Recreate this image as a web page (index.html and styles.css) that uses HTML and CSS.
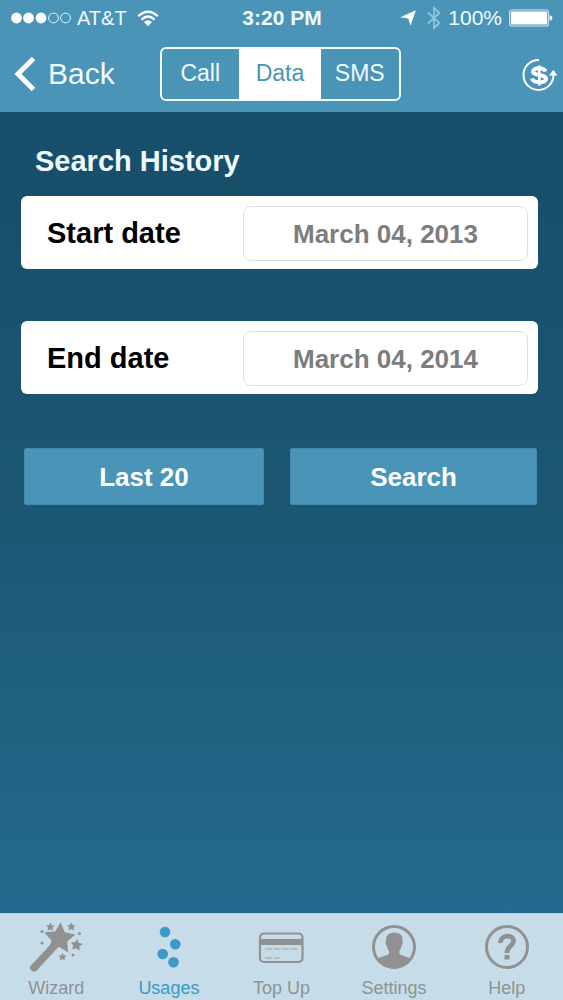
FILE: index.html
```html
<!DOCTYPE html>
<html lang="en">
<head>
<meta charset="utf-8">
<meta name="viewport" content="width=device-width, initial-scale=1">
<title>Search History</title>
<link rel="stylesheet" href="styles.css">
</head>
<body>
<div class="app">
  <header class="header">
    <div class="status">
      <div class="status-left">
        <svg class="signal" width="60" height="14" viewBox="0 0 60 14" aria-hidden="true">
          <g fill="#fff"><circle cx="5.500" cy="7" r="5.400"/><circle cx="17.500" cy="7" r="5.400"/><circle cx="30" cy="7" r="5.400"/></g>
          <g fill="none" stroke="#e6f6fd"><circle cx="42.500" cy="7" r="4.900"/><circle cx="54.500" cy="7" r="4.900"/></g>
        </svg>
        <span>AT&amp;T</span>
        <svg class="wifi" width="22" height="17" viewBox="0 0 22 17" aria-hidden="true">
          <g fill="none" stroke="#fff" stroke-width="2.400"><path d="M1.300 6.200Q11-2.600 20.700 6.200"/><path d="M4.500 9.600Q11 3.400 17.500 9.600"/></g>
          <path fill="#fff" d="M7 12Q11 8.300 15 12L11 16.200Z"/>
        </svg>
      </div>
      <span class="time">3:20 PM</span>
      <div class="status-right">
        <svg class="locate" width="16" height="16" viewBox="0 0 16 16" aria-hidden="true"><path fill="#fff" d="M15.800.3L10.500 15.800L8.300 8.600L.3 7.300Z"/></svg>
        <svg class="bluetooth" width="14" height="24" viewBox="0 0 14 24" aria-hidden="true"><path fill="none" stroke="#94c6dc" stroke-width="1.700" d="M1 6.500L12.500 17L7 22V2L12.500 7L1 17.500"/></svg>
        <span>100%</span>
        <svg class="battery" width="44" height="18" viewBox="0 0 44 18" aria-hidden="true">
          <rect x=".7" y="1" width="38.600" height="16" rx="2" fill="none" stroke="#cfe7f2" stroke-width="1.200"/>
          <rect x="2" y="2.500" width="36" height="13" rx="1" fill="#fff"/>
          <path fill="#e9f6fc" d="M40.500 6Q43.500 7 43.500 9T40.500 12Z"/>
        </svg>
      </div>
    </div>
    <nav class="navbar">
      <button class="back" type="button">
        <svg width="22" height="36" viewBox="0 0 22 36" aria-hidden="true"><path fill="none" stroke="#fff" stroke-width="5" d="M19.500 2.500L4 18L19.500 33.500"/></svg>
        <span>Back</span>
      </button>
      <div class="segments">
        <button class="segment" type="button">Call</button>
        <button class="segment selected" type="button">Data</button>
        <button class="segment" type="button">SMS</button>
      </div>
      <button class="balance" type="button" aria-label="Balance">
        <svg width="37" height="36" viewBox="0 0 37 36" aria-hidden="true">
          <path fill="none" stroke="#fff" stroke-width="2" d="M18 4A15 15 0 1 0 32.500 19V15"/>
          <path fill="#fff" d="M32.300 14L36.500 19.500H28Z"/>
          <path fill="none" stroke="#fff" stroke-width="4" d="M24.500 15.500C23 11.500 12 11 12 15.800C12 20 25 18 25 22.800C25 27.500 12.500 27.500 11 22.500"/>
          <path stroke="#fff" stroke-width="2.600" d="M18.300 9.500V29.500"/>
        </svg>
      </button>
    </nav>
  </header>
  <main class="content">
    <h1 class="title">Search History</h1>
    <form class="form">
      <div class="card">
        <label for="start">Start date</label>
        <input id="start" class="date" type="text" value="March 04, 2013">
      </div>
      <div class="card">
        <label for="end">End date</label>
        <input id="end" class="date" type="text" value="March 04, 2014">
      </div>
      <div class="actions">
        <button class="action" type="button">Last 20</button>
        <button class="action" type="button">Search</button>
      </div>
    </form>
  </main>
  <nav class="tabs">
    <a class="tab" href="#wizard">
      <svg width="56" height="54" viewBox="0 0 56 54" aria-hidden="true">
        <defs><path id="star" d="M0-10L2.900-4L9.500-3.100L4.800 1.500L5.900 8.100L0 5L-5.900 8.100L-4.800 1.500L-9.500-3.100L-2.900-4Z"/></defs>
        <g fill="#919191">
          <use href="#star" transform="translate(31.500 19.500) rotate(4) scale(1.640)"/>
          <use href="#star" transform="translate(22.300 8) scale(.45)"/>
          <use href="#star" transform="translate(43.200 7.800) scale(.45)"/>
          <use href="#star" transform="translate(48.500 26) rotate(8) scale(.64)"/>
          <use href="#star" transform="translate(34.500 38) scale(.42)"/>
          <circle cx="14" cy="12.500" r="1.500"/><circle cx="14" cy="24" r="1.500"/><circle cx="51.500" cy="14.500" r="1.500"/><circle cx="45" cy="36" r="1.500"/>
        </g>
        <path stroke="#919191" stroke-width="7.600" stroke-linecap="round" d="M6 48.800L28 25"/>
      </svg>
      <span>Wizard</span>
    </a>
    <a class="tab current" href="#usages">
      <svg width="56" height="54" viewBox="0 0 56 54" aria-hidden="true"><g fill="#3b9ac6"><circle cx="24" cy="13" r="5.300"/><circle cx="34.300" cy="25.200" r="5.300"/><circle cx="21.700" cy="35" r="5.300"/><circle cx="32.500" cy="43.200" r="5.300"/></g></svg>
      <span>Usages</span>
    </a>
    <a class="tab" href="#top-up">
      <svg width="56" height="54" viewBox="0 0 56 54" aria-hidden="true">
        <rect x="7" y="14.500" width="42.500" height="28.500" rx="4" fill="none" stroke="#919191" stroke-width="2.200"/>
        <path fill="#919191" d="M8 20H49V26H8Z"/>
        <path fill="none" stroke="#aab4b8" stroke-width="1.500" stroke-dasharray="7 1.500" d="M12 30H46M12 39H28"/>
      </svg>
      <span>Top Up</span>
    </a>
    <a class="tab" href="#settings">
      <svg width="56" height="54" viewBox="0 0 56 54" aria-hidden="true">
        <circle cx="28" cy="28" r="20.500" fill="none" stroke="#919191" stroke-width="3"/>
        <path fill="#919191" d="M11.500 40C16 36.500 23 37 23 34V32C21.500 30 21 28 20.700 26.500C19 25.500 19.300 22 20.300 21.500C19.300 16 23 14 28.500 13.500C34 14 37.500 16 36.200 21.500C37.300 22 37 25.500 35.500 26.500C35 29 34.500 31 33.300 32V34C33.500 37 40.500 36.500 44.500 40Q37 49 28 49T11.500 40Z"/>
      </svg>
      <span>Settings</span>
    </a>
    <a class="tab" href="#help">
      <svg width="56" height="54" viewBox="0 0 56 54" aria-hidden="true">
        <circle cx="28" cy="28" r="20.500" fill="none" stroke="#919191" stroke-width="3"/>
        <path fill="none" stroke="#919191" stroke-width="4.800" d="M21.500 24C21 15 35.500 15 34.500 22.500C34 27 28 27 28 34"/>
        <path fill="#919191" d="M25.500 36H30.500V40.500H25.500Z"/>
      </svg>
      <span>Help</span>
    </a>
  </nav>
</div>
</body>
</html>
```
FILE: styles.css
```css
* { box-sizing: border-box; }

body {
  margin: 0;
  font-family: "Liberation Sans", Arial, sans-serif;
}

button, input { margin: 0; font-family: inherit; }
svg { display: block; flex: none; }

.app {
  display: flex;
  flex-direction: column;
  min-height: 100vh;
  background: linear-gradient(#174e6a 112px, #1b5672 50%, #246a8e 914px);
}

.header {
  background: #4a95b7;
  color: #f0faff;
}

.status {
  display: grid;
  grid-template-columns: 1fr auto 1fr;
  align-items: center;
  height: 36px;
  padding: 0 10px 0 11px;
  font-size: 21px;
}

.status-left, .status-right { display: flex; align-items: center; }
.status-left { gap: 6px; font-size: 20px; }
.status-right { justify-content: flex-end; gap: 7px; }
.wifi { margin-left: 4px; }
.locate { margin-right: 4px; }
.time { font-weight: bold; }

.navbar {
  display: grid;
  grid-template-columns: 1fr auto 1fr;
  align-items: center;
  height: 76px;
  padding: 0 5px 0 14px;
}

.navbar button { border: 0; background: none; color: inherit; }

.navbar .back {
  display: flex;
  align-items: center;
  gap: 12px;
  padding: 0;
  font-size: 30px;
}

.segments {
  display: flex;
  width: 241px;
  height: 54px;
  margin-right: 12px;
  border: 2px solid #f0faff;
  border-radius: 6px;
}

.navbar .segment {
  flex: 1;
  padding: 0 0 2px;
  font-size: 23px;
}

.navbar .selected { flex: none; width: 82px; background: #fff; color: #4a95b7; }

.navbar .balance { justify-self: end; padding: 0; }

.content { flex: 1; padding: 31px 25px 40px 21px; }

.title {
  margin: 0 0 17px;
  padding-left: 14px;
  color: #eefaff;
  font-size: 29px;
  line-height: 36px;
}

.card {
  display: flex;
  align-items: center;
  justify-content: space-between;
  height: 73px;
  margin-bottom: 52px;
  padding: 2px 10px 0 26px;
  background: #fff;
  border-radius: 6px;
  color: #000;
  font-size: 29px;
  font-weight: bold;
}

.date {
  width: 285px;
  height: 55px;
  padding: 2px 0 0;
  background: #fff;
  border: 1px solid #dcdfe4;
  border-radius: 8px;
  color: #7d7d7d;
  font-size: 26px;
  font-weight: bold;
  text-align: center;
}

.actions {
  display: grid;
  grid-template-columns: 240fr 247fr;
  gap: 26px;
  padding: 2px 1px 0 3px;
}

.action {
  height: 57px;
  padding: 2px 0 0;
  background: #4a95b7;
  border: 1px solid #438bac;
  border-radius: 2px;
  color: #fff;
  font-size: 26px;
  font-weight: bold;
}

.tabs {
  display: flex;
  height: 87px;
  background: #c6dde9;
  border-top: 1px solid #b0cede;
}

.tab {
  display: flex;
  flex: 1;
  flex-direction: column;
  align-items: center;
  padding-top: 5px;
  color: #919191;
  font-size: 18px;
  line-height: 30px;
  text-decoration: none;
}

.current { color: #3b9ac6; }
```
